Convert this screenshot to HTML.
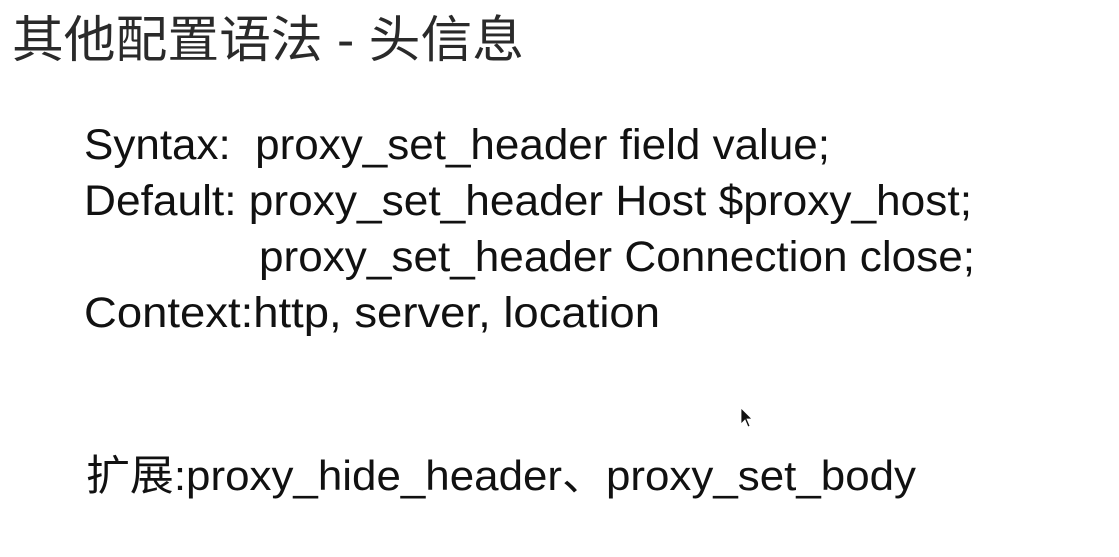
<!DOCTYPE html>
<html><head><meta charset="utf-8"><style>
html,body{margin:0;padding:0;background:#fff;width:1119px;height:557px;overflow:hidden}
svg{display:block}
text{font-family:"Liberation Sans","Noto Sans CJK SC",sans-serif;fill:#111}
</style></head><body>
<svg width="1119" height="557" viewBox="0 0 1119 557">
<text x="12" y="57" font-size="50" textLength="512" lengthAdjust="spacingAndGlyphs" style="fill:#2a2a2a">其他配置语法 - 头信息</text>
<text x="84" y="159" font-size="43" textLength="746" lengthAdjust="spacingAndGlyphs" xml:space="preserve">Syntax:  proxy_set_header field value;</text>
<text x="84" y="215" font-size="43" textLength="888" lengthAdjust="spacingAndGlyphs">Default: proxy_set_header Host $proxy_host;</text>
<text x="259" y="271" font-size="43" textLength="716" lengthAdjust="spacingAndGlyphs">proxy_set_header Connection close;</text>
<text x="84" y="327" font-size="43" textLength="576" lengthAdjust="spacingAndGlyphs">Context:http, server, location</text>
<text x="86" y="490" font-size="42" textLength="830" lengthAdjust="spacingAndGlyphs">扩展:proxy_hide_header、proxy_set_body</text>
<path d="M741 408 L741 424 L745 420 L748 427 L750 426 L747 419 L752 419 Z" fill="#111" stroke="#fff" stroke-width="0.8"/>
</svg>
</body></html>
